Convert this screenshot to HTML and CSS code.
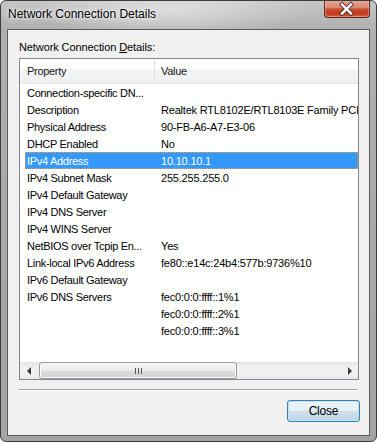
FILE: index.html
```html
<!DOCTYPE html>
<html>
<head>
	<title>Network Connection Details</title>
	<link rel="stylesheet" href="styles.css">
</head>
<body>
	<div class="window">
		<div class="titlebar">
			<span class="title">Network Connection Details</span>
			<div class="close-x">
				<svg width="46" height="18" viewBox="0 0 46 18">
					<path d="M18.5 4.5 L27.5 13.5 M27.5 4.5 L18.5 13.5" stroke="#4a2a25" stroke-width="4.4" stroke-linecap="square"/>
					<path d="M18.5 4.5 L27.5 13.5 M27.5 4.5 L18.5 13.5" stroke="#ffffff" stroke-width="2.6" stroke-linecap="square"/>
				</svg>
			</div>
		</div>

		<div class="client">
			<div class="caption">Network Connection <u>D</u>etails:</div>

			<div class="listview">
				<div class="lv-header">
					<div class="lv-col lv-col-prop">Property</div>
					<div class="lv-col lv-col-value">Value</div>
				</div>

				<div class="lv-body">
					<div class="lv-row"><span class="prop">Connection-specific DN...</span><span class="val"></span></div>
					<div class="lv-row"><span class="prop">Description</span><span class="val">Realtek RTL8102E/RTL8103E Family PCI-E Fast Ethernet NIC (NDIS 6.20)</span></div>
					<div class="lv-row"><span class="prop">Physical Address</span><span class="val">90-FB-A6-A7-E3-06</span></div>
					<div class="lv-row"><span class="prop">DHCP Enabled</span><span class="val">No</span></div>
					<div class="lv-row selected"><span class="prop">IPv4 Address</span><span class="val">10.10.10.1</span></div>
					<div class="lv-row"><span class="prop">IPv4 Subnet Mask</span><span class="val">255.255.255.0</span></div>
					<div class="lv-row"><span class="prop">IPv4 Default Gateway</span><span class="val"></span></div>
					<div class="lv-row"><span class="prop">IPv4 DNS Server</span><span class="val"></span></div>
					<div class="lv-row"><span class="prop">IPv4 WINS Server</span><span class="val"></span></div>
					<div class="lv-row"><span class="prop">NetBIOS over Tcpip En...</span><span class="val">Yes</span></div>
					<div class="lv-row"><span class="prop">Link-local IPv6 Address</span><span class="val">fe80::e14c:24b4:577b:9736%10</span></div>
					<div class="lv-row"><span class="prop">IPv6 Default Gateway</span><span class="val"></span></div>
					<div class="lv-row"><span class="prop">IPv6 DNS Servers</span><span class="val">fec0:0:0:ffff::1%1</span></div>
					<div class="lv-row"><span class="prop"></span><span class="val">fec0:0:0:ffff::2%1</span></div>
					<div class="lv-row"><span class="prop"></span><span class="val">fec0:0:0:ffff::3%1</span></div>
				</div>

				<div class="hscroll">
					<div class="sb-arrow"><span class="tri-left"></span></div>
					<div class="sb-track">
						<div class="sb-thumb"><span class="grip"></span></div>
					</div>
					<div class="sb-arrow"><span class="tri-right"></span></div>
				</div>
			</div>

			<div class="separator"></div>

			<div class="buttons">
				<div class="btn default">Close</div>
			</div>
		</div>
	</div>
</body>
</html>
```

FILE: styles.css
```css
		body {
			margin: 0;
			font-family: "Liberation Sans", Arial, sans-serif;
		}
		.window {
			width: 377px;
			height: 442px;
			box-sizing: border-box;
			border: 1px solid #3c3c3c;
			border-radius: 6px;
			background:
				radial-gradient(ellipse 140px 30px at 170px 8px, rgba(235, 235, 235, 0.7), rgba(235, 235, 235, 0)),
				linear-gradient(to bottom, #c6c6c6 0px, #b0b0b0 28px, #a9a9a9 200px, #a4a4a4 100%);
			display: flex;
			flex-direction: column;
			overflow: hidden;
		}
		.titlebar {
			height: 28px;
			display: flex;
			justify-content: space-between;
			align-items: flex-start;
			flex-shrink: 0;
		}
		.title {
			margin: 6px 0 0 7px;
			font-size: 12px;
			line-height: 15px;
			color: #000;
			text-shadow: 0 0 6px #fff, 0 0 3px #fff;
		}
		.close-x {
			width: 46px;
			height: 18px;
			margin-right: 6px;
			margin-top: -1px;
			box-sizing: border-box;
			border: 1px solid #5a2a22;
			border-top: none;
			border-radius: 0 0 4px 4px;
			background: linear-gradient(to bottom, #e6a898 0%, #d98872 45%, #c94a30 55%, #c13a20 80%, #d8603c 100%);
			box-shadow: inset 0 0 0 1px rgba(255, 200, 180, 0.45);
			display: flex;
		}
		.close-x svg {
			margin-left: -1px;
		}
		.client {
			margin: 0 6px 5px 6px;
			border: 1px solid #5c5c5c;
			background-color: #f0f0f0;
			padding: 10px 10px 13px 11px;
			display: flex;
			flex-direction: column;
			flex: 1;
			font-size: 11px;
		}
		.caption {
			height: 15px;
			line-height: 15px;
			margin-bottom: 3px;
			color: #000;
			letter-spacing: -0.1px;
		}
		.listview {
			height: 322px;
			box-sizing: border-box;
			border: 1px solid #828790;
			background-color: #fff;
			display: flex;
			flex-direction: column;
			overflow: hidden;
		}
		.lv-header {
			height: 25px;
			flex-shrink: 0;
			display: flex;
			box-sizing: border-box;
			border-bottom: 1px solid #e5e5e5;
			background: linear-gradient(to bottom, #ffffff 0%, #ffffff 40%, #f3f4f6 41%, #eef0f2 100%);
		}
		.lv-col {
			line-height: 24px;
			color: #1a1a1a;
			letter-spacing: -0.3px;
			box-sizing: border-box;
		}
		.lv-col-prop {
			width: 135px;
			padding-left: 7px;
			border-right: 1px solid #dedede;
		}
		.lv-col-value {
			padding-left: 6px;
		}
		.lv-body {
			flex: 1;
			overflow: hidden;
		}
		.lv-row {
			height: 17px;
			line-height: 18px;
			margin-left: 5px;
			display: flex;
			white-space: nowrap;
			letter-spacing: -0.3px;
			color: #000;
			box-sizing: border-box;
		}
		.lv-row .prop {
			width: 136px;
			padding-left: 2px;
			box-sizing: border-box;
			flex-shrink: 0;
		}
		.lv-row .val {
			flex-shrink: 0;
			letter-spacing: -0.2px;
		}
		.lv-row.selected {
			background-color: #3399ff;
			color: #fff;
			border: 1px dotted #f0a040;
			line-height: 16px;
		}
		.lv-row.selected .prop {
			padding-left: 1px;
			width: 135px;
		}
		.hscroll {
			height: 17px;
			flex-shrink: 0;
			display: flex;
			background: linear-gradient(to bottom, #e3e3e3, #f0f0f0 30%, #f0f0f0 70%, #e8e8e8);
		}
		.sb-arrow {
			width: 17px;
			display: flex;
			align-items: center;
			justify-content: center;
		}
		.tri-left {
			width: 0;
			height: 0;
			border-top: 4px solid transparent;
			border-bottom: 4px solid transparent;
			border-right: 4px solid #3a3a3a;
		}
		.tri-right {
			width: 0;
			height: 0;
			border-top: 4px solid transparent;
			border-bottom: 4px solid transparent;
			border-left: 4px solid #3a3a3a;
		}
		.sb-track {
			flex: 1;
			padding: 0 1px;
			display: flex;
		}
		.sb-thumb {
			width: 198px;
			margin-left: 1px;
			box-sizing: border-box;
			border: 1px solid #9a9a9a;
			border-radius: 3px;
			background: linear-gradient(to bottom, #f6f6f6 0%, #ebebeb 50%, #dcdcdc 51%, #d4d4d4 100%);
			box-shadow: inset 0 0 0 1px #fafafa;
			display: flex;
			align-items: center;
			justify-content: center;
		}
		.grip {
			width: 7px;
			height: 6px;
			background: linear-gradient(to right, #555 0, #555 1px, transparent 1px, transparent 3px, #555 3px, #555 4px, transparent 4px, transparent 6px, #555 6px, #555 7px);
		}
		.separator {
			height: 1px;
			margin: 9px 2px 0 0;
			background-color: #a0a0a0;
			border-bottom: 1px solid #fff;
		}
		.buttons {
			display: flex;
			justify-content: flex-end;
			margin-top: 9px;
			margin-right: -1px;
		}
		.btn {
			width: 73px;
			height: 22px;
			box-sizing: border-box;
			border: 1px solid #3c7fb1;
			border-radius: 3px;
			background: linear-gradient(to bottom, #eef6fb 0%, #e3eef5 50%, #cfe1ec 51%, #bed4e3 100%);
			box-shadow: inset 0 0 0 1px #b8e4f8;
			text-align: center;
			line-height: 20px;
			font-size: 12px;
			letter-spacing: -0.2px;
			color: #000;
		}
```
